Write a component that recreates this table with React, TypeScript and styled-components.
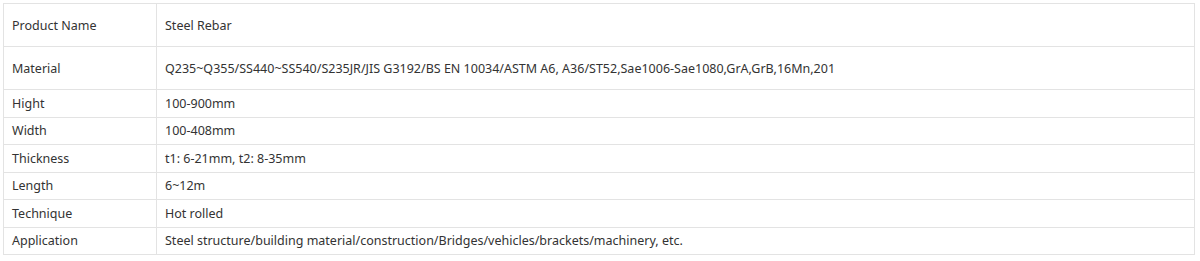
import styled, { createGlobalStyle } from "styled-components";

const GlobalStyle = createGlobalStyle`
  body {
    margin: 0;
    background: #fff;
    font-family: "Noto Sans", "Open Sans", sans-serif;
  }
`;

const Wrapper = styled.div`
  padding: 3px 5px 0 3px;
`;

const SpecTable = styled.table`
  width: 100%;
  border-collapse: collapse;
  font-size: 12.5px;
  color: #333;
`;

const Row = styled.tr<{ $tall?: boolean }>`
  height: ${(p) => (p.$tall ? "43px" : "27.5px")};
`;

const Cell = styled.td`
  border: 1px solid #e3e3e3;
  padding: 0 8px;
  vertical-align: middle;
  line-height: 17px;
`;

const LabelCell = styled(Cell)`
  width: 136px;
`;

const specs = [
  { label: "Product Name", value: "Steel Rebar", tall: true },
  {
    label: "Material",
    value:
      "Q235~Q355/SS440~SS540/S235JR/JIS G3192/BS EN 10034/ASTM A6, A36/ST52,Sae1006-Sae1080,GrA,GrB,16Mn,201",
    tall: true,
  },
  { label: "Hight", value: "100-900mm" },
  { label: "Width", value: "100-408mm" },
  { label: "Thickness", value: "t1: 6-21mm, t2: 8-35mm" },
  { label: "Length", value: "6~12m" },
  { label: "Technique", value: "Hot rolled" },
  {
    label: "Application",
    value:
      "Steel structure/building material/construction/Bridges/vehicles/brackets/machinery, etc.",
  },
];

export default function App() {
  return (
    <>
      <GlobalStyle />
      <Wrapper>
        <SpecTable>
          <tbody>
            {specs.map((s) => (
              <Row key={s.label} $tall={s.tall}>
                <LabelCell>{s.label}</LabelCell>
                <Cell>{s.value}</Cell>
              </Row>
            ))}
          </tbody>
        </SpecTable>
      </Wrapper>
    </>
  );
}
